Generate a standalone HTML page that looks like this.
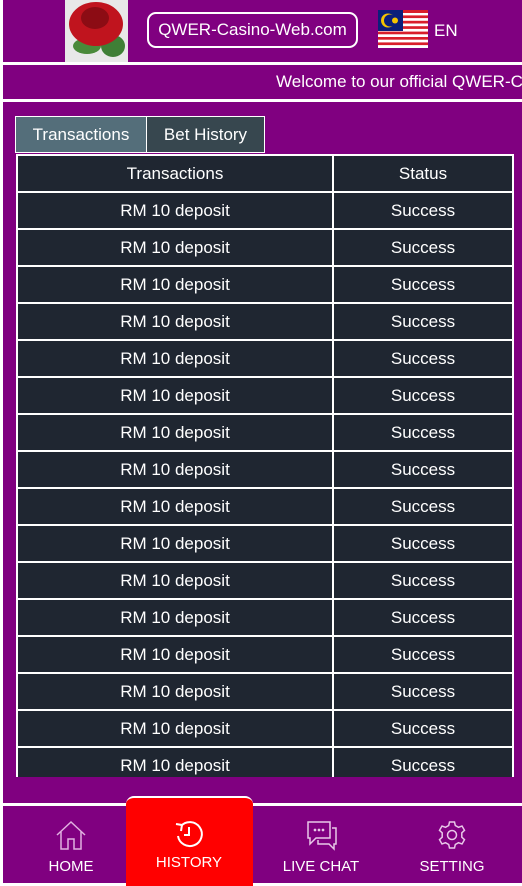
<!DOCTYPE html>
<html><head><meta charset="utf-8"><style>
*{box-sizing:border-box;margin:0;padding:0}
body{width:522px;height:886px;overflow:hidden;background:#fff;font-family:"Liberation Sans",sans-serif;position:relative;color:#fff}
.p{position:absolute;background:#800080;left:3px;right:0}
.btn{position:absolute;left:147px;top:12px;width:211px;height:36px;border:2px solid #fff;border-radius:9px;font-size:17px;text-align:center;line-height:32px}
table{width:498px;border-collapse:collapse;background:#1f2631}
td{border:2px solid #fff;height:37px;text-align:center;font-size:17px}
.scroll{position:absolute;left:16px;top:154px;width:498px;height:623px;overflow:hidden}
.tab{position:absolute;top:116px;height:37px;border:1px solid #fff;font-size:17px;text-align:center;line-height:35px}
.nav{position:absolute;top:822px;text-align:center;font-size:15px;width:100px}
</style></head><body>
<div class="p" style="top:0;height:62px"></div>
<div class="p" style="top:65px;height:34px;overflow:hidden"><div style="position:absolute;left:273px;top:7px;font-size:17px;white-space:nowrap">Welcome to our official QWER-Casino</div></div>
<div class="p" style="top:102px;height:701px"></div>
<div class="p" style="top:806px;height:77px"></div>
<div style="position:absolute;left:65px;top:0;width:63px;height:62px;background:#e8e8e8">
<svg width="63" height="62"><ellipse cx="22" cy="46" rx="14" ry="8" fill="#4a8a3a"/><ellipse cx="48" cy="46" rx="12" ry="11" fill="#3f7f36"/><ellipse cx="31" cy="24" rx="27" ry="22" fill="#c0141e"/><ellipse cx="30" cy="18" rx="14" ry="11" fill="#8c0c14"/></svg></div>
<div class="btn">QWER-Casino-Web.com</div>
<svg style="position:absolute;left:378px;top:10px" width="50" height="38"><rect width="50" height="38" fill="#fff"/><g fill="#d91e2a"><rect y="0" width="50" height="3"/><rect y="5.4" width="50" height="2.7"/><rect y="10.8" width="50" height="2.7"/><rect y="16.2" width="50" height="2.7"/><rect y="21.6" width="50" height="2.7"/><rect y="27" width="50" height="2.7"/><rect y="32.4" width="50" height="2.7"/></g><rect width="25" height="21" fill="#0b1f7a"/><circle cx="10" cy="10.5" r="7" fill="#f5c400"/><circle cx="12" cy="10.5" r="6" fill="#0b1f7a"/><circle cx="17" cy="10.5" r="3" fill="#f5c400"/></svg>
<div style="position:absolute;left:434px;top:21px;font-size:17px">EN</div>
<div class="tab" style="left:15px;width:132px;background:#546e7a">Transactions</div>
<div class="tab" style="left:146px;width:119px;background:#37474f">Bet History</div>
<div class="scroll"><table>
<tr><td style="width:316px">Transactions</td><td>Status</td></tr>
<tr><td>RM 10 deposit</td><td>Success</td></tr><tr><td>RM 10 deposit</td><td>Success</td></tr><tr><td>RM 10 deposit</td><td>Success</td></tr><tr><td>RM 10 deposit</td><td>Success</td></tr><tr><td>RM 10 deposit</td><td>Success</td></tr><tr><td>RM 10 deposit</td><td>Success</td></tr><tr><td>RM 10 deposit</td><td>Success</td></tr><tr><td>RM 10 deposit</td><td>Success</td></tr><tr><td>RM 10 deposit</td><td>Success</td></tr><tr><td>RM 10 deposit</td><td>Success</td></tr><tr><td>RM 10 deposit</td><td>Success</td></tr><tr><td>RM 10 deposit</td><td>Success</td></tr><tr><td>RM 10 deposit</td><td>Success</td></tr><tr><td>RM 10 deposit</td><td>Success</td></tr><tr><td>RM 10 deposit</td><td>Success</td></tr><tr><td>RM 10 deposit</td><td>Success</td></tr><tr><td>RM 10 deposit</td><td>Success</td></tr>
</table></div>
<div style="position:absolute;left:126px;top:796px;width:127px;height:90px;background:#f00;border-top:2px solid #fff;border-radius:8px 8px 0 0"></div>
<svg style="position:absolute;left:55px;top:820px" width="32" height="32" fill="none" stroke="#e0b0e0" stroke-width="1.5"><path d="M2 15 L16 2 L30 15 M6 11 V29 H13 V19 H19 V29 H26 V11"/></svg>
<svg style="position:absolute;left:173px;top:818px" width="32" height="32" fill="none" stroke="#fff" stroke-width="2"><path d="M8 8 A12 12 0 1 1 5 18"/><path d="M3 6 L9 7 L8 13"/><path d="M16 9 V17 H11"/></svg>
<svg style="position:absolute;left:306px;top:820px" width="32" height="32" fill="none" stroke="#e8c8e8" stroke-width="1.5"><path d="M2 2 H24 V18 H10 L4 24 V18 H2 Z"/><path d="M26 8 H30 V24 H28 V29 L23 24 H12 V20"/><circle cx="9" cy="10" r=".6" fill="#fff"/><circle cx="13" cy="10" r=".6" fill="#fff"/><circle cx="17" cy="10" r=".6" fill="#fff"/></svg>
<svg style="position:absolute;left:437px;top:820px" width="30" height="30" fill="none" stroke="#e8c8e8" stroke-width="1.5"><circle cx="15" cy="15" r="4.5"/><path d="M12.5 2 H17.5 L18.3 5.5 L21.5 7.3 L25 6 L27.5 10.3 L24.8 12.8 V17.2 L27.5 19.7 L25 24 L21.5 22.7 L18.3 24.5 L17.5 28 H12.5 L11.7 24.5 L8.5 22.7 L5 24 L2.5 19.7 L5.2 17.2 V12.8 L2.5 10.3 L5 6 L8.5 7.3 L11.7 5.5 Z"/></svg>
<div class="nav" style="left:21px;top:858px">HOME</div>
<div class="nav" style="left:139px;top:854px">HISTORY</div>
<div class="nav" style="left:271px;top:858px">LIVE CHAT</div>
<div class="nav" style="left:402px;top:858px">SETTING</div>
</body></html>
